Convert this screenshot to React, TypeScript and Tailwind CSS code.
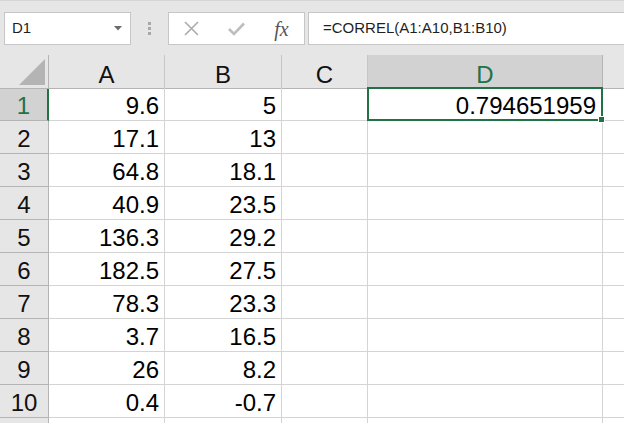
const data: [string, string][] = [
  ['9.6', '5'],
  ['17.1', '13'],
  ['64.8', '18.1'],
  ['40.9', '23.5'],
  ['136.3', '29.2'],
  ['182.5', '27.5'],
  ['78.3', '23.3'],
  ['3.7', '16.5'],
  ['26', '8.2'],
  ['0.4', '-0.7'],
  ['', ''],
]

function FormulaBar() {
  return (
    <div className="h-[55px] bg-[#e6e6e6] flex items-start pt-[11px] pl-[4px] border-t border-[#d6d6d6]">
      <div className="w-[127px] h-[33px] bg-white border border-[#c6c6c6] flex items-center justify-between pl-[7px] pr-[8px]">
        <span className="text-[15px] text-[#1f1f1f]">D1</span>
        <svg width="8" height="5" viewBox="0 0 8 5">
          <polygon points="0,0 8,0 4,4.5" fill="#6b6b6b" />
        </svg>
      </div>
      <div className="w-[37px] h-[33px] flex flex-col items-center justify-center gap-[2px]">
        <div className="w-[3px] h-[3px] bg-[#a8a8a8]" />
        <div className="w-[3px] h-[3px] bg-[#a8a8a8]" />
        <div className="w-[3px] h-[3px] bg-[#a8a8a8]" />
      </div>
      <div className="w-[137px] h-[33px] bg-white border border-[#c6c6c6] flex items-center">
        <div className="w-[45px] flex justify-center">
          <svg width="15" height="15" viewBox="0 0 15 15">
            <path d="M1 1 L14 14 M14 1 L1 14" stroke="#ababab" strokeWidth="1.6" fill="none" />
          </svg>
        </div>
        <div className="w-[45px] flex justify-center">
          <svg width="17" height="14" viewBox="0 0 17 14">
            <path d="M1 7 L6 12 L16 1.5" stroke="#bdbdbd" strokeWidth="2.6" fill="none" />
          </svg>
        </div>
        <div className="w-[45px] flex justify-center">
          <span className="font-['Liberation_Serif',serif] italic text-[20px] leading-none text-[#555]">fx</span>
        </div>
      </div>
      <div className="ml-[3px] flex-1 h-[33px] bg-white border border-r-0 border-[#c6c6c6] flex items-center pl-[14px]">
        <span className="text-[15px] text-[#1f1f1f]">=CORREL(A1:A10,B1:B10)</span>
      </div>
    </div>
  )
}

export default function App() {
  return (
    <div className="w-[624px] h-[423px] overflow-hidden bg-white font-['Liberation_Sans',Arial,sans-serif]">
      <FormulaBar />
      <div className="grid grid-cols-[49px_116px_117px_86px_235px_1fr] auto-rows-[33px] text-[24px] leading-[24px]">
        {/* header row */}
        <div className="h-[34px] bg-[#e6e6e6] border-r border-b border-[#b4b4b4] relative">
          <svg className="absolute left-[19px] top-[4px]" width="27" height="26" viewBox="0 0 27 26">
            <polygon points="0,26 26,26 26,0" fill="#b4b4b4" />
          </svg>
        </div>
        <div className="h-[34px] bg-[#e6e6e6] border-r border-[#c6c6c6] border-b border-b-[#b4b4b4] flex items-end justify-center pb-[1px] text-[#111]">A</div>
        <div className="h-[34px] bg-[#e6e6e6] border-r border-[#c6c6c6] border-b border-b-[#b4b4b4] flex items-end justify-center pb-[1px] text-[#111]">B</div>
        <div className="h-[34px] bg-[#e6e6e6] border-r border-[#c6c6c6] border-b border-b-[#b4b4b4] flex items-end justify-center pb-[1px] text-[#111]">C</div>
        <div className="h-[34px] bg-[#d2d2d2] border-r border-[#b4b4b4] border-b-2 border-b-[#217346] flex items-end justify-center pb-0 text-[#217346]">D</div>
        <div className="h-[34px] bg-[#e6e6e6] border-b border-[#b4b4b4]" />

        {data.map(([a, b], i) => {
          const n = i + 1
          const sel = n === 1
          return [
            <div
              key={`h${n}`}
              className={
                sel
                  ? 'bg-[#d2d2d2] border-b border-[#b4b4b4] border-r-2 border-r-[#217346] flex items-end justify-center pb-[2px] text-[#217346]'
                  : 'bg-[#e6e6e6] border-b border-r border-[#b4b4b4] flex items-end justify-center pb-[2px] text-[#111]'
              }
            >
              {n <= 10 ? n : ''}
            </div>,
            <div key={`a${n}`} className="border-r border-b border-[#d4d4d4] flex items-end justify-end pr-[5px] pb-[2px] text-black">
              {a}
            </div>,
            <div key={`b${n}`} className="border-r border-b border-[#d4d4d4] flex items-end justify-end pr-[5px] pb-[2px] text-black">
              {b}
            </div>,
            <div key={`c${n}`} className="border-r border-b border-[#d4d4d4]" />,
            <div key={`d${n}`} className="relative border-r border-b border-[#d4d4d4] flex items-end justify-end pr-[6px] pb-[2px] text-black">
              {sel && '0.794651959'}
              {sel && (
                <div className="absolute -left-[1px] -top-[1px] -right-[1px] -bottom-[1px] border-2 border-[#217346] z-10">
                  <div className="absolute -right-[4px] -bottom-[4px] w-[7px] h-[7px] bg-[#217346] border border-white" />
                </div>
              )}
            </div>,
            <div key={`e${n}`} className="border-b border-[#d4d4d4]" />,
          ]
        })}
      </div>
    </div>
  )
}
